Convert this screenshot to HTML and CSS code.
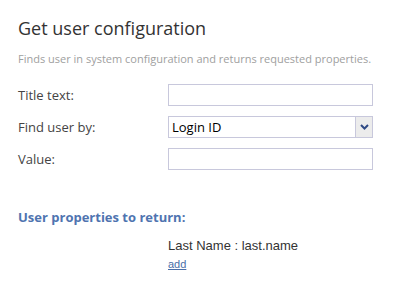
FILE: index.html
```html
<!DOCTYPE html>
<html lang="en">
<head>
  <meta charset="UTF-8">
  <meta name="viewport" content="width=device-width, initial-scale=1.0">
  <title>Get user configuration</title>
  <link rel="stylesheet" href="styles.css">
</head>
<body>

<h1>Get user configuration</h1>
<p class="description">Finds user in system configuration and returns requested properties.</p>

<!-- Settings -->
<form class="settings">
  <div class="row">
    <label for="titleText">Title text:</label>
    <input type="text" id="titleText" class="field">
  </div>
  <div class="row">
    <label for="findBy">Find user by:</label>
    <div class="select-box">
      <span class="select-value">Login ID</span>
      <span class="select-arrow">
        <svg width="9" height="6" viewBox="0 0 9 6"><path d="M1 1 L4.5 4.5 L8 1" fill="none" stroke="#2f4a85" stroke-width="2"/></svg>
      </span>
    </div>
  </div>
  <div class="row">
    <label for="value">Value:</label>
    <input type="text" id="value" class="field">
  </div>
</form>

<h3>User properties to return:</h3>
<div class="properties">
  <div class="property">Last Name : last.name</div>
  <a href="#" class="add">add</a>
</div>

</body>
</html>
```

FILE: styles.css
```css
body {
  font-family: "Open Sans", sans-serif;
  margin: 0;
  padding: 0 18px;
  color: #333;
  background-color: #fff;
}
h1 {
  font-size: 18px;
  font-weight: normal;
  margin: 15px 0 0;
  line-height: 26px;
  color: #333;
}
.description {
  font-size: 11px;
  color: #a0a0a0;
  margin: 10px 0 0;
  line-height: 16px;
}
.settings {
  margin-top: 17px;
  display: flex;
  flex-direction: column;
  gap: 10px;
}
.row {
  display: flex;
  align-items: center;
  height: 22px;
}
.row label {
  width: 150px;
  font-size: 13px;
  color: #444;
}
.field, .select-box {
  width: 205px;
  height: 22px;
  box-sizing: border-box;
  border: 1px solid #c8c8dc;
  margin: 0;
  padding: 0 4px;
}
.select-box {
  display: flex;
  align-items: center;
  justify-content: space-between;
  padding: 0 0 0 3px;
  font-size: 13px;
  color: #000;
}
.select-arrow {
  width: 16px;
  height: 20px;
  background-color: #ececec;
  border-left: 1px solid #c8c8dc;
  display: flex;
  align-items: center;
  justify-content: center;
}
h3 {
  font-size: 13px;
  font-weight: bold;
  color: #4f74b0;
  margin: 38px 0 0;
  line-height: 18px;
}
.properties {
  margin-left: 150px;
  margin-top: 12px;
  font-family: "Liberation Sans", Arial, sans-serif;
}
.property {
  font-size: 13px;
  color: #333;
  line-height: 16px;
}
.add {
  display: inline-block;
  margin-top: 2px;
  font-size: 11px;
  color: #4a6fa8;
}
```
